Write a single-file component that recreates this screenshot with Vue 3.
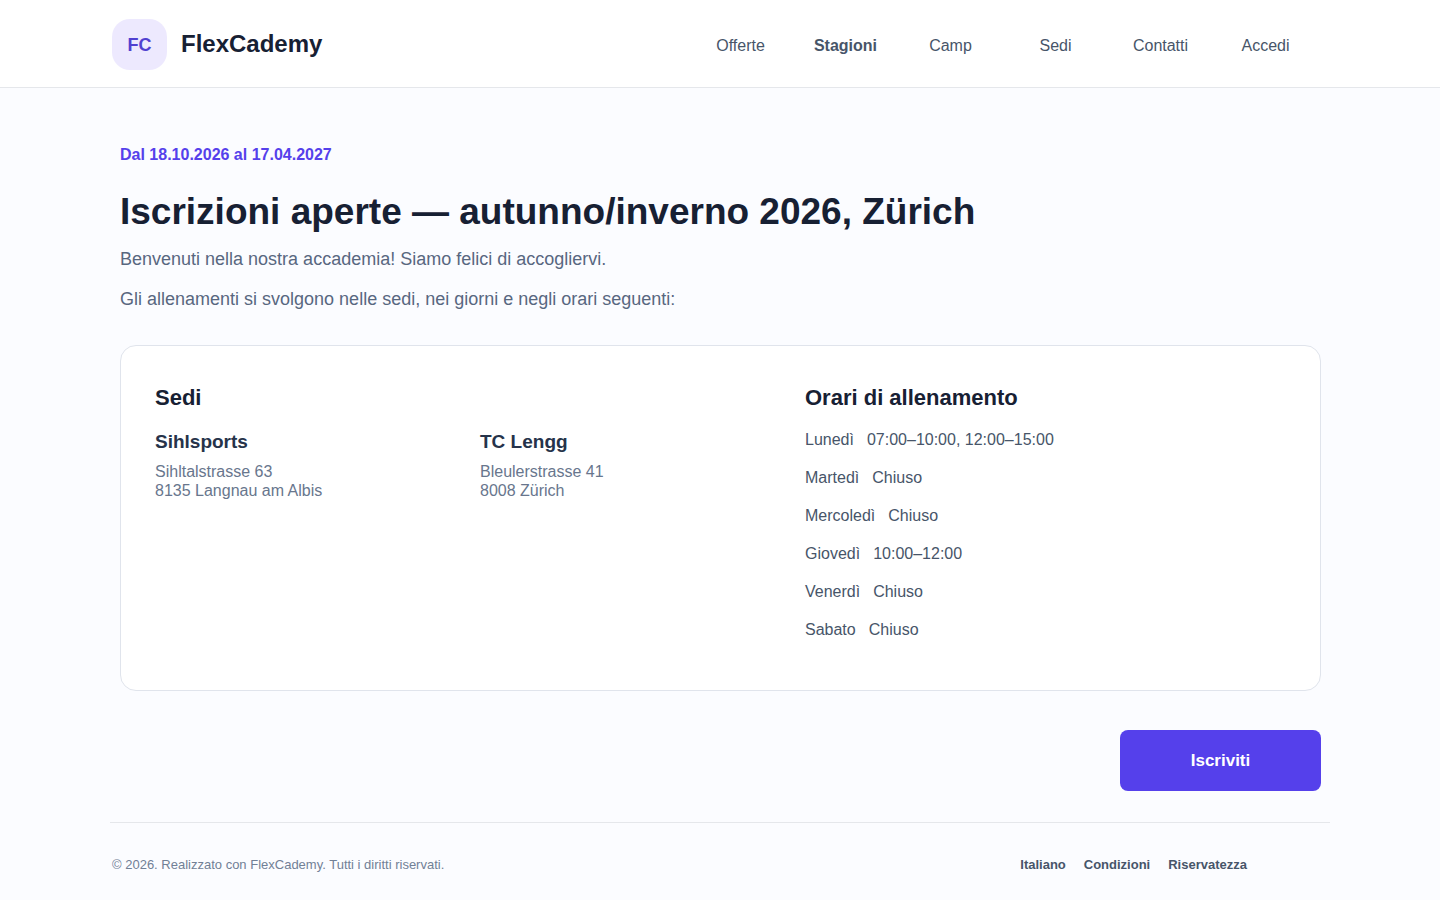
<script setup>
const nav = ['Offerte', 'Stagioni', 'Camp', 'Sedi', 'Contatti', 'Accedi']
const venues = [
  { name: 'Sihlsports', street: 'Sihltalstrasse 63', city: '8135 Langnau am Albis' },
  { name: 'TC Lengg', street: 'Bleulerstrasse 41', city: '8008 Zürich' },
]
const hours = [
  { day: 'Lunedì', time: '07:00–10:00, 12:00–15:00' },
  { day: 'Martedì', time: 'Chiuso' },
  { day: 'Mercoledì', time: 'Chiuso' },
  { day: 'Giovedì', time: '10:00–12:00' },
  { day: 'Venerdì', time: 'Chiuso' },
  { day: 'Sabato', time: 'Chiuso' },
]
const links = ['Italiano', 'Condizioni', 'Riservatezza']
</script>

<template>
  <div class="page">
    <header class="top">
      <div class="bar">
        <a class="brand" href="#"><span class="mark">FC</span><span class="name">FlexCademy</span></a>
        <nav class="nav">
          <a v-for="n in nav" :key="n" href="#" :class="{ active: n === 'Stagioni' }">{{ n }}</a>
        </nav>
      </div>
    </header>
    <main class="main">
      <p class="dates">Dal 18.10.2026 al 17.04.2027</p>
      <h1>Iscrizioni aperte — autunno/inverno 2026, Zürich</h1>
      <p class="lead">Benvenuti nella nostra accademia! Siamo felici di accogliervi.</p>
      <p class="lead">Gli allenamenti si svolgono nelle sedi, nei giorni e negli orari seguenti:</p>
      <div class="card">
        <section>
          <h2>Sedi</h2>
          <div class="venues">
            <div v-for="v in venues" :key="v.name">
              <h3>{{ v.name }}</h3>
              <address>{{ v.street }}<br>{{ v.city }}</address>
            </div>
          </div>
        </section>
        <section>
          <h2>Orari di allenamento</h2>
          <ul class="hours">
            <li v-for="h in hours" :key="h.day"><span>{{ h.day }}</span><span>{{ h.time }}</span></li>
          </ul>
        </section>
      </div>
      <div class="actions"><button type="button">Iscriviti</button></div>
    </main>
    <footer class="foot">
      <p>© 2026. Realizzato con FlexCademy. Tutti i diritti riservati.</p>
      <nav><a v-for="l in links" :key="l" href="#">{{ l }}</a></nav>
    </footer>
  </div>
</template>

<style>
body { background: #fbfcff; }
</style>

<style scoped>
.page { font-family: "Liberation Sans", Arial, sans-serif; color: #172033; }
.page * { box-sizing: border-box; }
p, h1, h2, h3, ul { margin: 0; padding: 0; }
a { color: inherit; text-decoration: none; }
.top { background: #fff; border-bottom: 1px solid #e5e7eb; }
.bar { max-width: 1216px; margin: 0 auto; padding: 19px 0 17px; display: flex; align-items: center; justify-content: space-between; }
.brand { display: flex; align-items: center; gap: 14px; }
.mark { width: 55px; height: 51px; border-radius: 18px; background: #ede9fe; color: #5040d0; font-size: 18px; line-height: 20px; font-weight: 700; display: flex; align-items: center; justify-content: center; }
.name { font-size: 24px; line-height: 26px; padding-bottom: 2px; font-weight: 700; }
.nav { display: grid; grid-template-columns: repeat(6, 105px); padding: 2px 10px 0 0; font-size: 16px; line-height: 20px; color: #475569; text-align: center; }
.active { font-weight: 700; }
.main { max-width: 1202px; margin: 0 auto; padding: 57px 0 0 1px; }
.dates { font-size: 16px; line-height: 20px; font-weight: 700; color: #5540eb; }
h1 { font-size: 37px; line-height: 44px; margin: 25px 0 13px; }
.lead { font-size: 18px; line-height: 24px; color: #58677f; margin-bottom: 16px; }
.card { margin-top: 34px; border: 1px solid #e0e4ec; border-radius: 16px; background: #fff; padding: 38px 34px 50px; display: grid; grid-template-columns: 650fr 481fr; }
h2 { font-size: 22px; line-height: 28px; }
h3 { font-size: 19px; line-height: 24px; color: #26334a; }
.venues { display: grid; grid-template-columns: 1fr 1fr; margin-top: 18px; }
address { font-style: normal; font-size: 16px; line-height: 19px; color: #68768d; margin-top: 8px; }
.hours { list-style: none; font-size: 16px; line-height: 20px; color: #475569; display: grid; gap: 18px; margin-top: 18px; }
.hours li { display: flex; gap: 13px; }
.actions { display: flex; justify-content: flex-end; margin-top: 39px; }
button { width: 201px; height: 61px; border: 0; border-radius: 8px; background: #5540eb; color: #fff; font: 700 17px "Liberation Sans", Arial, sans-serif; }
.foot { max-width: 1220px; margin: 31px auto 0; border-top: 1px solid #e5e7eb; padding: 32px 83px 24px 2px; display: flex; justify-content: space-between; font-size: 13px; line-height: 20px; color: #718096; }
.foot nav { display: flex; gap: 18px; color: #475569; font-weight: 700; }
</style>
